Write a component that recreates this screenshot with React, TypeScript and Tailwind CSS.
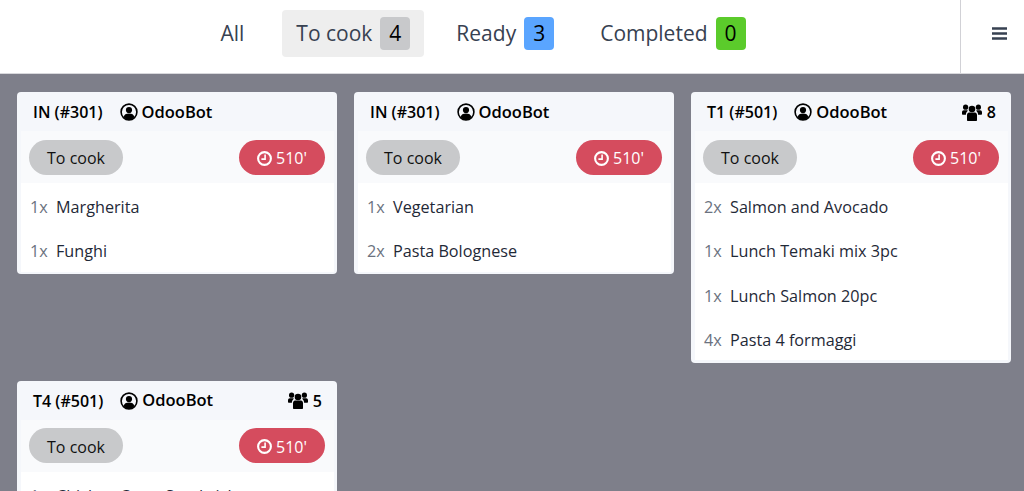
import React from "react";

const font = "font-['Open_Sans','Noto_Sans',sans-serif]";

function UserIcon() {
  return (
    <svg viewBox="0 0 18 18" className="w-[18px] h-[18px] shrink-0" aria-hidden="true">
      <circle cx="9" cy="9" r="7.9" fill="none" stroke="#000" strokeWidth="1.6" />
      <circle cx="9" cy="7" r="3.1" fill="#000" />
      <path d="M3.6 14.2c.6-2.6 2.4-3.6 5.4-3.6s4.8 1 5.4 3.6A7.6 7.6 0 0 1 9 16.6a7.6 7.6 0 0 1-5.4-2.4z" fill="#000" />
    </svg>
  );
}

function UsersIcon() {
  return (
    <svg viewBox="0 0 20 17" className="w-[20px] h-[17px] shrink-0" aria-hidden="true">
      <circle cx="10" cy="5" r="3.3" fill="#000" />
      <circle cx="3.6" cy="3.2" r="2.6" fill="#000" />
      <circle cx="16.4" cy="3.2" r="2.6" fill="#000" />
      <path d="M5 11c0-1.7 1-2.6 2-2.6h6c1 0 2 .9 2 2.6v5c0 .6-.4 1-1 1H6c-.6 0-1-.4-1-1z" fill="#000" />
      <path d="M0 8.4c0-1.3.8-2.2 1.8-2.2h3c.5 0 1 .2 1.2.6C4.6 7.6 3.9 9 3.9 10.8H1c-.6 0-1-.4-1-1zM20 8.4c0-1.3-.8-2.2-1.8-2.2h-3c-.5 0-1 .2-1.2.6 1.4.8 2.1 2.2 2.1 4H19c.6 0 1-.4 1-1z" fill="#000" />
    </svg>
  );
}

function ClockIcon() {
  return (
    <svg viewBox="0 0 15 15" className="w-[15px] h-[15px] shrink-0" aria-hidden="true">
      <circle cx="7.5" cy="7.5" r="6.4" fill="none" stroke="#fff" strokeWidth="2.1" />
      <path d="M8.1 3.6v4.5H4.4" fill="none" stroke="#fff" strokeWidth="1.6" />
    </svg>
  );
}

type Order = {
  title: string;
  guests?: number;
  lines: [string, string][];
};

const orders: Order[] = [
  { title: "IN (#301)", lines: [["1x", "Margherita"], ["1x", "Funghi"]] },
  { title: "IN (#301)", lines: [["1x", "Vegetarian"], ["2x", "Pasta Bolognese"]] },
  {
    title: "T1 (#501)",
    guests: 8,
    lines: [["2x", "Salmon and Avocado"], ["1x", "Lunch Temaki mix 3pc"], ["1x", "Lunch Salmon 20pc"], ["4x", "Pasta 4 formaggi"]],
  },
  { title: "T4 (#501)", guests: 5, lines: [["1x", "Chicken Curry Sandwich"]] },
];

function Tab({ label, count, color, active, wide }: { label: string; count?: number; color?: string; active?: boolean; wide?: boolean }) {
  return (
    <div className={`flex items-center h-[47px] rounded ${wide ? "px-[20px]" : "px-[14px]"} ${active ? "bg-[#eeeeee]" : ""}`}>
      <span className="text-[21px] text-[#374151]">{label}</span>
      {count !== undefined && (
        <span className={`ml-[8px] flex items-center justify-center w-[30px] h-[33px] rounded text-[21px] text-black ${color}`}>{count}</span>
      )}
    </div>
  );
}

function Card({ order }: { order: Order }) {
  return (
    <div className="w-[320px] rounded bg-[#f5f7fb] pl-[4px] pr-[3px] pb-[2.4px]">
      <div className="flex items-center h-[39px] pt-[1px] pl-[12px] pr-[12px] text-[16px] font-semibold text-black">
        <span>{order.title}</span>
        <span className="ml-[17px] flex items-center gap-[4px]">
          <UserIcon />
          <span className="text-[16.5px]">OdooBot</span>
        </span>
        {order.guests !== undefined && (
          <span className="ml-auto flex items-center gap-[5px]">
            <UsersIcon />
            <span>{order.guests}</span>
          </span>
        )}
      </div>
      <div className="flex items-center justify-between h-[52px] pl-[8px] pr-[9px] bg-[#f9fafc]">
        <span className="flex items-center justify-center w-[94px] h-[35px] pt-[2px] rounded-full bg-[#c8c9cb] text-[16px] text-[#111]">To cook</span>
        <span className="flex items-center justify-center gap-[4px] w-[86px] h-[35px] pt-[2px] rounded-full bg-[#d54c5e] text-[16px] text-white">
          <ClockIcon />
          510'
        </span>
      </div>
      <div className="bg-white">
        {order.lines.map(([qty, name], i) => (
          <div key={i} className="flex items-center h-[44.3px] pt-[4px] px-[9px] text-[16.2px]">
            <span className="w-[26px] text-[#6b7280]">{qty}</span>
            <span className="text-[#1f2937]">{name}</span>
          </div>
        ))}
      </div>
    </div>
  );
}

export default function App() {
  return (
    <div className={`${font} w-[1024px] h-[491px] overflow-hidden bg-[#7e7f8a] flex flex-col`}>
      <header className="flex h-[74px] shrink-0 bg-white border-b border-[#d8d8dc]">
        <div className="flex-1 flex items-center justify-center gap-[18px] pb-[6px]">
          <Tab label="All" wide />
          <Tab label="To cook" count={4} color="bg-[#c8c9cb]" active />
          <Tab label="Ready" count={3} color="bg-[#5aa5ff]" />
          <Tab label="Completed" count={0} color="bg-[#5bcb2b]" />
        </div>
        <div className="w-[64px] border-l border-[#d1d1d6] flex items-center justify-center pl-[13px] pb-[6px]">
          <svg viewBox="0 0 15 13" className="w-[15px] h-[13px]" aria-hidden="true">
            <path d="M0 1.5h15M0 6.5h15M0 11.5h15" stroke="#374151" strokeWidth="2.6" />
          </svg>
        </div>
      </header>
      <main className="grid grid-cols-[repeat(3,320px)] items-start gap-x-[17px] gap-y-[18px] pl-[17px] pt-[18px]">
        {orders.map((o, i) => (
          <Card key={i} order={o} />
        ))}
      </main>
    </div>
  );
}
